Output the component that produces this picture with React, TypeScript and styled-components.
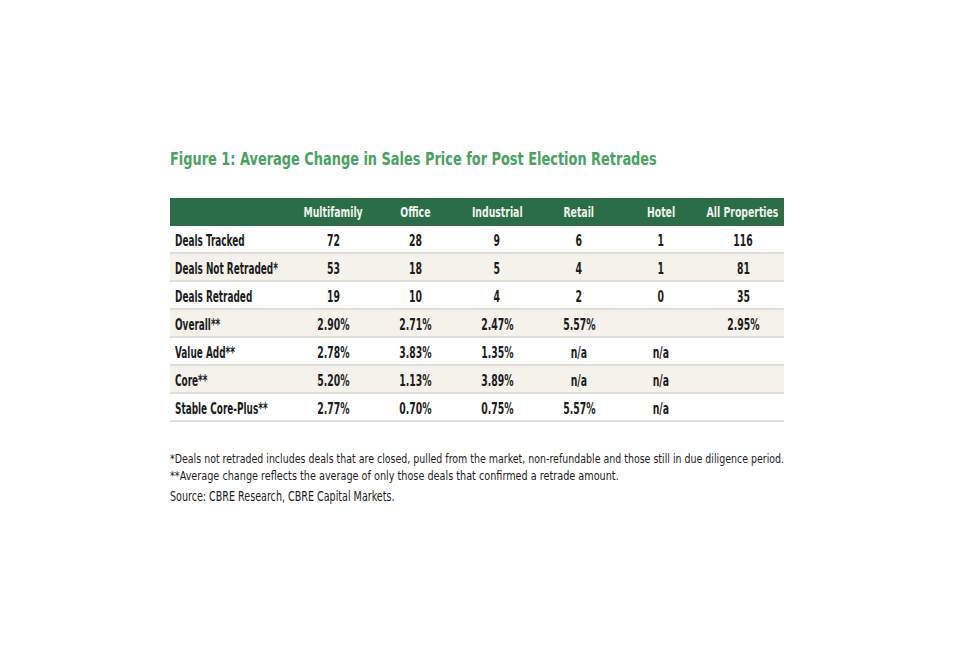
import React, { FC } from 'react'
import styled, { createGlobalStyle } from 'styled-components'

const GlobalStyle = createGlobalStyle`
  html, body {
    margin: 0;
    padding: 0;
    background: #ffffff;
  }
  body {
    font-family: 'DejaVu Sans Condensed', 'DejaVu Sans', 'Liberation Sans', sans-serif;
    color: #1c1c1c;
  }
`

// the source uses a condensed geometric face; squeeze DejaVu Condensed to match its widths
const Squeeze = styled.span<{ $scale: number; $left?: boolean }>`
  display: inline-block;
  white-space: nowrap;
  transform: scaleX(${(p) => p.$scale});
  transform-origin: ${(p) => (p.$left ? 'left center' : 'center center')};
  margin: ${(p) => (p.$left ? '0' : '0 -30px')};
`

const Page = styled.div`
  width: 960px;
  height: 654px;
  box-sizing: border-box;
  padding: 147px 0 0 170px;
`

const Figure = styled.div`
  width: 614px;
`

const Title = styled.h1`
  margin: 0 0 27px;
  font-size: 17px;
  line-height: 24px;
  font-weight: 700;
  color: #49a262;
`

const Table = styled.table`
  width: 614px;
  border-collapse: collapse;
  table-layout: fixed;
`

const HeadCell = styled.th<{ $first?: boolean }>`
  height: 28px;
  padding: 0;
  background: #2b6d47;
  color: #eef3ee;
  font-size: 14px;
  font-weight: 700;
  text-align: center;
  white-space: nowrap;
  width: ${(p) => (p.$first ? '122px' : '82px')};
`

const Row = styled.tr<{ $shaded: boolean }>`
  background: ${(p) => (p.$shaded ? '#f4f2eb' : '#ffffff')};
  border-bottom: 2px solid #dfdfda;
`

const Label = styled.td`
  height: 23px;
  padding: 3px 0 0 5px;
  font-size: 15px;
  font-weight: 700;
  white-space: nowrap;
`

const Value = styled.td`
  height: 23px;
  padding: 3px 0 0;
  font-size: 15px;
  font-weight: 700;
  text-align: center;
  white-space: nowrap;
`

const Notes = styled.div`
  margin-top: 28px;
  font-size: 12.5px;
  line-height: 17px;
`

const Source = styled.div`
  margin-top: 4px;
  font-size: 14px;
  line-height: 17px;
`

const columns = ['Multifamily', 'Office', 'Industrial', 'Retail', 'Hotel', 'All Properties']

const rows: [string, string[]][] = [
  ['Deals Tracked', ['72', '28', '9', '6', '1', '116']],
  ['Deals Not Retraded*', ['53', '18', '5', '4', '1', '81']],
  ['Deals Retraded', ['19', '10', '4', '2', '0', '35']],
  ['Overall**', ['2.90%', '2.71%', '2.47%', '5.57%', '', '2.95%']],
  ['Value Add**', ['2.78%', '3.83%', '1.35%', 'n/a', 'n/a', '']],
  ['Core**', ['5.20%', '1.13%', '3.89%', 'n/a', 'n/a', '']],
  ['Stable Core-Plus**', ['2.77%', '0.70%', '0.75%', '5.57%', 'n/a', '']]
]

const App: FC = () => (
  <>
    <GlobalStyle />
    <Page>
      <Figure>
        <Title>
          <Squeeze $scale={0.845} $left>
            Figure 1: Average Change in Sales Price for Post Election Retrades
          </Squeeze>
        </Title>
        <Table>
          <thead>
            <tr>
              <HeadCell $first />
              {columns.map((c) => (
                <HeadCell key={c}>
                  <Squeeze $scale={0.74}>{c}</Squeeze>
                </HeadCell>
              ))}
            </tr>
          </thead>
          <tbody>
            {rows.map(([label, values], i) => (
              <Row key={label} $shaded={i % 2 === 1}>
                <Label>
                  <Squeeze $scale={0.66} $left>{label}</Squeeze>
                </Label>
                {values.map((v, j) => (
                  <Value key={j}>
                    <Squeeze $scale={0.69}>{v}</Squeeze>
                  </Value>
                ))}
              </Row>
            ))}
          </tbody>
        </Table>
        <Notes>
          <div>
            <Squeeze $scale={0.84} $left>
              *Deals not retraded includes deals that are closed, pulled from the market, non-refundable and those still in due diligence period.
            </Squeeze>
          </div>
          <div>
            <Squeeze $scale={0.86} $left>
              **Average change reflects the average of only those deals that confirmed a retrade amount.
            </Squeeze>
          </div>
        </Notes>
        <Source>
          <Squeeze $scale={0.76} $left>Source: CBRE Research, CBRE Capital Markets.</Squeeze>
        </Source>
      </Figure>
    </Page>
  </>
)

export default App
